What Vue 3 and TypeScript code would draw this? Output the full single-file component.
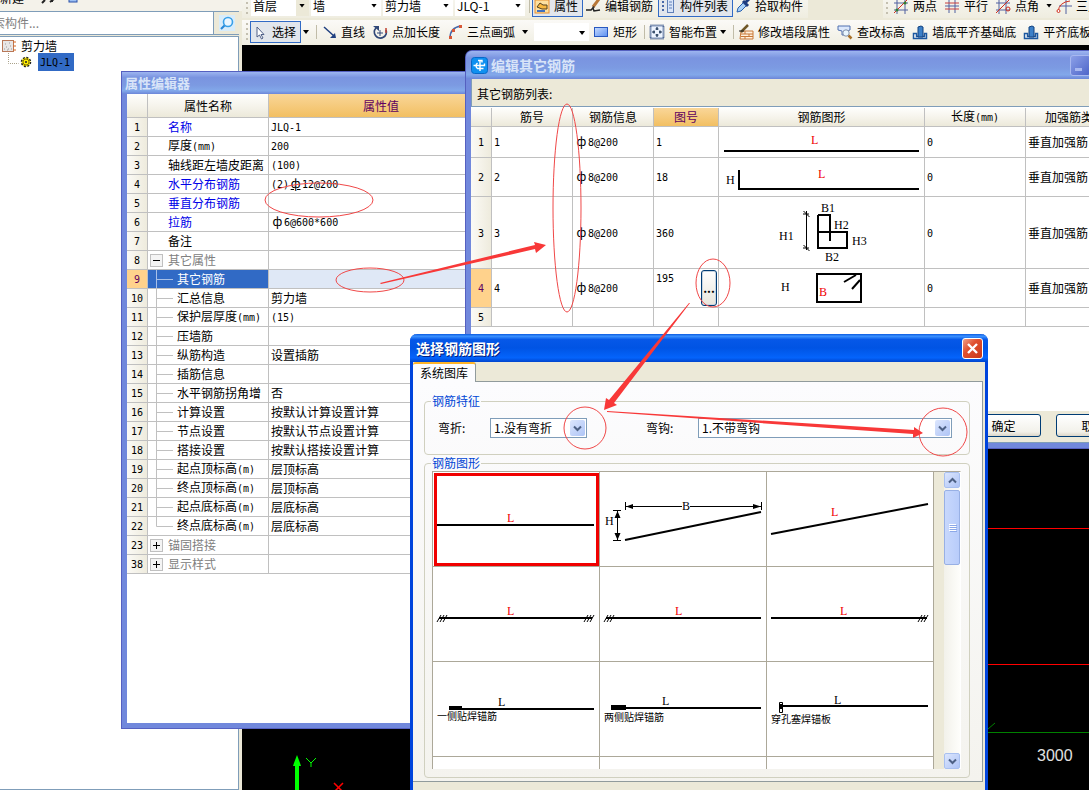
<script setup lang="ts">
import { h, ref } from 'vue'

interface PropRow {
  no: number
  name: string
  value?: string
  level?: number
  kind?: 'key' | 'group'
  open?: boolean
  last?: boolean
  selected?: boolean
  grade2?: boolean
}

/** Text with its half-width runs in the narrow fixed-pitch face and the bar symbol set full width. */
const Txt = (props: { t: string }) =>
  h(
    'span',
    { class: 'txt' },
    props.t
      .split(/([\x20-\x7e]+|ф)/)
      .filter(Boolean)
      .map((part) => {
        if (part === 'ф') return h('span', { class: 'phi' }, part)
        return /^[\x20-\x7e]/.test(part) ? h('span', { class: 'half' }, part) : part
      }),
  )
Txt.props = ['t']

const props: PropRow[] = [
  { no: 1, name: '名称', value: 'JLQ-1', kind: 'key' },
  { no: 2, name: '厚度(mm)', value: '200' },
  { no: 3, name: '轴线距左墙皮距离', value: '(100)' },
  { no: 4, name: '水平分布钢筋', value: '(2)ф12@200', kind: 'key', grade2: true },
  { no: 5, name: '垂直分布钢筋', kind: 'key' },
  { no: 6, name: '拉筋', value: 'ф6@600*600', kind: 'key' },
  { no: 7, name: '备注' },
  { no: 8, name: '其它属性', kind: 'group', open: true },
  { no: 9, name: '其它钢筋', level: 1, selected: true },
  { no: 10, name: '汇总信息', value: '剪力墙', level: 1 },
  { no: 11, name: '保护层厚度(mm)', value: '(15)', level: 1 },
  { no: 12, name: '压墙筋', level: 1 },
  { no: 13, name: '纵筋构造', value: '设置插筋', level: 1 },
  { no: 14, name: '插筋信息', level: 1 },
  { no: 15, name: '水平钢筋拐角增', value: '否', level: 1 },
  { no: 16, name: '计算设置', value: '按默认计算设置计算', level: 1 },
  { no: 17, name: '节点设置', value: '按默认节点设置计算', level: 1 },
  { no: 18, name: '搭接设置', value: '按默认搭接设置计算', level: 1 },
  { no: 19, name: '起点顶标高(m)', value: '层顶标高', level: 1 },
  { no: 20, name: '终点顶标高(m)', value: '层顶标高', level: 1 },
  { no: 21, name: '起点底标高(m)', value: '层底标高', level: 1 },
  { no: 22, name: '终点底标高(m)', value: '层底标高', level: 1, last: true },
  { no: 23, name: '锚固搭接', kind: 'group' },
  { no: 38, name: '显示样式', kind: 'group' },
]

const bars = [
  { no: 1, fig: '1' },
  { no: 2, fig: '18' },
  { no: 3, fig: '360' },
  { no: 4, fig: '195' },
]

const picked = ref(0)
const search = ref('')
</script>

<template>
  <div class="app">
    <aside class="side">
      <div class="side-top">
        <span>新建</span>
        <svg width="60" height="8" viewBox="0 0 60 8">
          <path d="M1 3l3-3M9 2l4-3M11 0v2" stroke="#222" stroke-width="2" fill="none" />
          <rect x="28" y="-6" width="8" height="8" fill="#9cc0f4" stroke="#2a50a8" />
        </svg>
      </div>
      <div class="search">
        <input v-model="search" type="text" placeholder="搜索构件..." aria-label="搜索构件" />
        <button type="button" aria-label="查找">
          <svg width="16" height="16" viewBox="0 0 16 16">
            <rect width="16" height="16" fill="#d8ecfa" />
            <circle cx="9" cy="7" r="4.5" fill="#eaf6ff" stroke="#38a0e8" stroke-width="1.6" />
            <path d="M5.500 10.500L2 14" stroke="#2888d8" stroke-width="2.200" />
          </svg>
        </button>
      </div>
      <div class="tree">
        <div class="node">
          <svg width="16" height="14" viewBox="0 0 16 14">
            <rect x="1.500" y="1.500" width="11" height="11" fill="#e8e6e6" stroke="#b87858" />
            <path d="M12 3h3M12 7h3M12 11h3" stroke="#d86820" />
            <path d="M3 10h1M5 8h1M7 10h1M9 7h1M4 5h1M8 4h1M10 10h1M6 11h1" stroke="#999" />
          </svg>
          <span>剪力墙</span>
        </div>
        <div class="node child">
          <svg width="27" height="18" viewBox="0 0 27 18">
            <path d="M1.500 0v10.500h10" stroke="#a8a088" fill="none" stroke-dasharray="1 1" />
            <circle cx="19" cy="9" r="4.500" fill="#ffee00" stroke="#222" stroke-width="1.500" stroke-dasharray="2 1.500" />
            <circle cx="19" cy="9" r="3" fill="#ffee00" stroke="#887700" />
            <circle cx="19" cy="9" r="1" fill="#222" />
          </svg>
          <span class="hot"><Txt t="JLQ-1" /></span>
        </div>
      </div>
    </aside>

    <main class="work">
      <div class="bars">
        <div class="bar-row first">
          <div class="bar">
            <i class="grip"></i>
            <span class="combo short shade"><select aria-label="楼层"><option>首层</option></select></span>
            <span class="combo"><select aria-label="类型"><option>墙</option></select></span>
            <span class="combo"><select aria-label="构件类型"><option>剪力墙</option></select></span>
            <span class="combo"><select aria-label="构件"><option>JLQ-1</option></select></span>
            <i class="sep"></i>
            <button type="button" class="tool on">
              <svg width="16" height="16" viewBox="0 0 16 16">
                <rect x="1" y="2" width="14" height="13" fill="#fde0a0" stroke="#e89030" />
                <path d="M3 9l3-4 3 2 4 0 0 4-5 0z" fill="#f8b840" stroke="#554020" />
                <path d="M3 13h8" stroke="#4070c0" stroke-width="2" />
              </svg>属性
            </button>
            <button type="button" class="tool">
              <svg width="16" height="16" viewBox="0 0 16 16">
                <path d="M1 12h5l2-2 1 3 6-1" stroke="#222" stroke-width="1.500" fill="none" />
                <path d="M8 9l6-8" stroke="#b87838" stroke-width="3" />
                <path d="M7 11l1-3 2 1z" fill="#333" />
              </svg>编辑钢筋
            </button>
            <button type="button" class="tool on">
              <svg width="16" height="16" viewBox="0 0 16 16">
                <path d="M2 4h3M2 8h3M2 12h3" stroke="#4868a8" stroke-width="2" stroke-dasharray="2 1" />
                <rect x="7.500" y="1.500" width="6" height="13" fill="#d8e4f8" stroke="#6080b8" />
                <path d="M9 4h3M9 7h3M9 10h3" stroke="#6080b8" />
              </svg>构件列表
            </button>
            <button type="button" class="tool">
              <svg width="16" height="16" viewBox="0 0 16 16">
                <path d="M2 14l1-4 6-6 3 3-6 6z" fill="#a8d0f8" stroke="#2860b0" />
                <path d="M8 3l5 5M10 5l4-4" stroke="#1c3c80" stroke-width="3" />
              </svg>拾取构件
            </button>
          </div>
          <div class="bar far">
            <i class="grip"></i>
            <button type="button" class="tool">
              <svg width="16" height="16" viewBox="0 0 16 16">
                <path d="M4 2v14M12 2v14M1 5h14M1 12h14" stroke="#5060a0" />
                <path d="M1 15L14 2" stroke="#d03020" /><circle cx="12" cy="5" r="1.500" fill="#308030" /><circle cx="4" cy="12" r="1.500" fill="#308030" />
              </svg>两点
            </button>
            <button type="button" class="tool">
              <svg width="16" height="16" viewBox="0 0 16 16">
                <path d="M5 1v14M11 1v14" stroke="#5060a0" /><path d="M1 5h14M1 11h14" stroke="#c84040" /><path d="M1 8h14" stroke="#5060a0" />
              </svg>平行
            </button>
            <button type="button" class="tool">
              <svg width="16" height="16" viewBox="0 0 16 16">
                <path d="M4 2v14M11 2v14M1 5h14M1 12h14" stroke="#5060a0" />
                <path d="M1 15L14 2" stroke="#d03020" /><circle cx="13" cy="11" r="2" fill="none" stroke="#d03020" />
              </svg>点角
            </button>
            <i class="caret"></i>
            <button type="button" class="tool">
              <svg width="16" height="16" viewBox="0 0 16 16">
                <path d="M10 2v14M3 8h13" stroke="#5060a0" />
                <path d="M2 14q1-10 12-11" stroke="#d03020" fill="none" /><circle cx="2.500" cy="13" r="1.500" fill="#fff" stroke="#d03020" />
              </svg>三点辅轴
            </button>
          </div>
        </div>
        <div class="bar-row second">
          <i class="grip"></i>
          <button type="button" class="tool on">
            <svg width="16" height="16" viewBox="0 0 16 16">
              <path d="M5 3v10l2.500-2 2 4 1.500-1-2-3.500h3z" fill="#fff" stroke="#506088" />
            </svg>选择
          </button>
          <i class="caret"></i><i class="sep wide"></i>
          <button type="button" class="tool">
            <svg width="16" height="16" viewBox="0 0 16 16">
              <path d="M3 3l10 9" stroke="#204080" stroke-width="1.500" /><path d="M15 14H9l5-5z" fill="#204080" />
            </svg>直线
          </button>
          <button type="button" class="tool">
            <svg width="16" height="16" viewBox="0 0 16 16">
              <path d="M4 4a6 6 0 1 0 10 2" stroke="#304878" stroke-width="1.800" fill="none" />
              <path d="M1 2h6v5z" fill="#304878" /><path d="M8 6v6M5 9h6" stroke="#304878" /><path d="M14 4v5" stroke="#c04030" stroke-width="1.500" />
            </svg>点加长度
          </button>
          <button type="button" class="tool split">
            <svg width="16" height="16" viewBox="0 0 16 16">
              <path d="M3 14C3 7 7 3 14 2" stroke="#4868a8" stroke-width="1.500" fill="none" />
              <path d="M2 12h3v3H2zM5 5h3v3H5zM12 1h3v3h-3z" fill="#d85838" />
            </svg>三点画弧
          </button>
          <i class="caret wide"></i>
          <span class="combo blank"><select aria-label="顺逆"><option></option></select></span>
          <button type="button" class="tool">
            <svg width="16" height="16" viewBox="0 0 16 16">
              <defs><linearGradient id="rg" x2="1" y2="1"><stop offset="0" stop-color="#c8dcff" /><stop offset="1" stop-color="#5c90f0" /></linearGradient></defs>
              <rect x="1.500" y="3.500" width="13" height="9" fill="url(#rg)" stroke="#2858c0" />
            </svg>矩形
          </button>
          <i class="sep"></i>
          <button type="button" class="tool split">
            <svg width="16" height="16" viewBox="0 0 16 16">
              <rect x="1.500" y="1.500" width="13" height="13" fill="#eef4ff" stroke="#1c3c78" stroke-width="2" stroke-dasharray="1 1" />
              <path d="M8 3v3M8 10v3M3 8h3M10 8h3M6.500 5h3M6.500 11h3M5 6.500v3M11 6.500v3" stroke="#10284c" stroke-width="1.200" />
            </svg>智能布置
          </button>
          <i class="caret"></i><i class="sep wide"></i>
          <button type="button" class="tool">
            <svg width="16" height="16" viewBox="0 0 16 16">
              <path d="M3 7h12v8H2z" fill="#fff0dc" stroke="#c87838" /><path d="M3 10h12M3 12.500h12M7 7v3M11 10v3M7 12v3" stroke="#c87838" />
              <path d="M3 8l7-7" stroke="#705828" stroke-width="2.500" /><path d="M1 7h5" stroke="#222" />
            </svg>修改墙段属性
          </button>
          <button type="button" class="tool">
            <svg width="16" height="16" viewBox="0 0 16 16">
              <path d="M1 2h12v4l-3 1v4H5V7L1 6z" fill="#dce8fc" stroke="#5070b0" />
              <circle cx="9" cy="9" r="3.200" fill="#e8f6ff" stroke="#8090a8" /><path d="M11.500 11.500l3 3" stroke="#a87028" stroke-width="2.500" />
            </svg>查改标高
          </button>
          <button v-for="name in ['墙底平齐基础底', '平齐底板']" :key="name" type="button" class="tool">
            <svg width="16" height="16" viewBox="0 0 16 16">
              <path d="M1.500 14.500V9.500h3v3h8v-3h2v5z" fill="#fff" stroke="#1c58a0" stroke-width="1.500" />
              <path d="M6 13V3l3-1 2 1v10z" fill="#3c80c8" stroke="#104080" />
            </svg>{{ name }}
          </button>
        </div>
      </div>

      <svg class="canvas" width="847" height="745" viewBox="0 0 847 745">
        <path d="M0 483.500H847M0 619.500H847" stroke="#ff0000" />
        <path d="M746 687.500H847M746 684l7-6" stroke="#008000" />
        <text x="795" y="716" class="dim">3000</text>
        <path d="M53 745v-24h-2l1-3 3-8 3 8 1 3h-2v24z" fill="#00ff00" />
        <path d="M64 713l5 5 5-5M69 718v4" stroke="#00ff00" fill="none" />
        <path d="M92 738l9 9M101 738l-9 9" stroke="#ff0000" stroke-width="1.500" />
      </svg>
    </main>

    <!-- 属性编辑器 -->
    <section class="win prop-win">
      <h2 class="cap small">属性编辑器</h2>
      <div class="sheet">
        <table class="grid prop">
          <colgroup><col class="c-no" /><col class="c-name" /><col /></colgroup>
          <thead><tr><th></th><th>属性名称</th><th class="hot-col value-col">属性值</th></tr></thead>
          <tbody>
            <tr v-for="r in props" :key="r.no" :class="{ sel: r.selected }">
              <th scope="row"><Txt :t="String(r.no)" /></th>
              <td>
                <div class="name" :class="[r.kind, { deep: r.level }]">
                  <svg v-if="r.level" class="twig" width="29" height="19" viewBox="0 0 29 19">
                    <path :d="r.last ? 'M8.500 0v9.500H25' : 'M8.500 0v19M8.500 9.500H25'" fill="none" :stroke="r.selected ? '#a8c0e8' : '#c0c0c0'" />
                  </svg>
                  <button v-else-if="r.kind === 'group'" type="button" class="fold" :aria-label="r.name">
                    <svg width="9" height="9" viewBox="0 0 9 9"><path :d="r.open ? 'M1 4.500h7' : 'M1 4.500h7M4.500 1v7'" stroke="#000" /></svg>
                  </button>
                  <Txt :t="r.name" />
                </div>
              </td>
              <td :class="{ grade: r.grade2 }"><Txt :t="r.value ?? ''" /></td>
            </tr>
          </tbody>
        </table>
      </div>
    </section>

    <!-- 编辑其它钢筋 -->
    <section class="win bar-win">
      <header class="cap">
        <svg width="17" height="17" viewBox="0 0 17 17">
          <rect x="0.500" y="0.500" width="16" height="16" rx="3" fill="#1090f0" stroke="#0868c8" />
          <path d="M9 14V3.500h-2M9 3.500h2v2M2.500 8.500h11v-2M6.500 6q-3 2.500 0 5.500h6" stroke="#fff" stroke-width="1.400" fill="none" />
        </svg>
        <h2>编辑其它钢筋</h2>
        <button type="button" class="sys" aria-label="最小化"><i></i></button>
        <button type="button" class="sys" aria-label="最大化"></button>
        <button type="button" class="sys" aria-label="关闭"></button>
      </header>
      <p class="lead">其它钢筋列表:</p>
      <div class="sheet">
        <table class="grid list">
          <colgroup>
            <col class="c-no" /><col class="c-a" /><col class="c-a" /><col class="c-fig" /><col class="c-pic" /><col class="c-len" /><col class="c-type" />
          </colgroup>
          <thead>
            <tr>
              <th></th><th>筋号</th><th>钢筋信息</th><th class="hot-col">图号</th><th>钢筋图形</th><th><Txt t="长度(mm)" /></th><th>加强筋类型</th>
            </tr>
          </thead>
          <tbody>
            <tr v-for="b in bars" :key="b.no" :class="['r' + b.no, { cur: b.no === 4 }]">
              <th scope="row"><Txt :t="String(b.no)" /></th>
              <td><Txt :t="String(b.no)" /></td>
              <td><Txt t="ф8@200" /></td>
              <td>
                <div v-if="b.no === 4" class="pick"><Txt :t="b.fig" /><button type="button" aria-label="选择图形">...</button></div>
                <Txt v-else :t="b.fig" />
              </td>
              <td class="pic">
                <svg v-if="b.no === 1" width="205" height="30" viewBox="0 0 205 30">
                  <path d="M5 24H200" class="ink" /><text x="92" y="17" class="red">L</text>
                </svg>
                <svg v-else-if="b.no === 2" width="205" height="38" viewBox="0 0 205 38">
                  <path d="M20 12V31H200" class="ink" /><text x="7" y="26">H</text><text x="99" y="20" class="red">L</text>
                </svg>
                <svg v-else-if="b.no === 3" width="205" height="71" viewBox="0 0 205 71">
                  <path d="M99 18H111V44M99 18V51H128V35H99" class="ink" />
                  <path d="M87.500 14V53M84 17h6M84.500 14l6 6M84 51h6M84.500 48l6 6" class="thin" />
                  <text x="60" y="43">H1</text><text x="102" y="15">B1</text><text x="115" y="32">H2</text><text x="133" y="48">H3</text><text x="106" y="64">B2</text>
                </svg>
                <svg v-else width="205" height="38" viewBox="0 0 205 38">
                  <path d="M98 5H142V33H98ZM125 13L137 6M133 20L141 11" class="ink" />
                  <text x="62" y="22">H</text><text x="100" y="27" class="red">B</text>
                </svg>
              </td>
              <td><Txt t="0" /></td>
              <td>垂直加强筋</td>
            </tr>
            <tr>
              <th scope="row"><Txt t="5" /></th><td></td><td></td><td></td><td></td><td></td><td></td>
            </tr>
          </tbody>
        </table>
      </div>
      <footer class="foot">
        <button type="button" class="push">确定</button>
        <button type="button" class="push">取消</button>
      </footer>
    </section>

    <!-- 选择钢筋图形 -->
    <section class="dialog" role="dialog" aria-labelledby="dlg">
      <header class="dcap">
        <h2 id="dlg">选择钢筋图形</h2>
        <button type="button" class="close" aria-label="关闭">
          <svg width="19" height="19" viewBox="0 0 19 19"><path d="M5 5l9 9M14 5l-9 9" stroke="#fff" stroke-width="2.400" /></svg>
        </button>
      </header>
      <div class="dbody">
        <div class="tabs"><button type="button" class="tab">系统图库</button></div>
        <div class="pane">
          <fieldset class="feat">
            <legend>钢筋特征</legend>
            <div class="fields">
              <label for="bend">弯折:</label>
              <span class="drop bend"><select id="bend"><option>1.没有弯折</option></select><i><svg width="9" height="7" viewBox="0 0 9 7"><path d="M1 1.500l3.500 3.500L8 1.500" /></svg></i></span>
              <label for="hook">弯钩:</label>
              <span class="drop hook"><select id="hook"><option>1.不带弯钩</option></select><i><svg width="9" height="7" viewBox="0 0 9 7"><path d="M1 1.500l3.500 3.500L8 1.500" /></svg></i></span>
            </div>
          </fieldset>
          <fieldset class="shapes">
            <legend>钢筋图形</legend>
            <div class="lib">
              <div class="cells">
                <button v-for="n in 12" :key="n" type="button" class="cell" :class="{ chosen: picked === n - 1 }" :aria-label="'图形 ' + n" @click="picked = n - 1">
                  <svg width="166" height="94" viewBox="0 0 166 94">
                    <g v-if="n === 1"><path d="M4 53H161" class="ink" /><text x="74" y="50" class="red">L</text></g>
                    <g v-else-if="n === 2">
                      <path d="M25 68L161 40" class="ink" />
                      <path d="M25.500 30v8M161.500 30v8M26 34.500H82M90 34.500H161M17.500 39V69M13 38.500h8M13 68.500h8" class="thin" />
                      <path d="M26 34.500l7-2.500v5zM161 34.500l-8-2.500v5zM17.500 39l3 7h-6zM17.500 68l3-7h-6z" />
                      <text x="5" y="53">H</text><text x="82" y="38">B</text>
                    </g>
                    <g v-else-if="n === 3"><path d="M4 62L161 32" class="ink" /><text x="64" y="44" class="red">L</text></g>
                    <g v-else-if="n === 4">
                      <path d="M6 51H159" class="ink" /><path d="M4 55l4-7M7 55l4-7M10 55l4-7M151 55l4-7M154 55l4-7M157 55l4-7" class="thin" />
                      <text x="74" y="48" class="red">L</text>
                    </g>
                    <g v-else-if="n === 5">
                      <path d="M6 51H161" class="ink" /><path d="M4 55l4-7M7 55l4-7M10 55l4-7" class="thin" /><text x="75" y="48" class="red">L</text>
                    </g>
                    <g v-else-if="n === 6">
                      <path d="M4 51H160" class="ink" /><path d="M151 55l4-7M154 55l4-7M157 55l4-7" class="thin" /><text x="73" y="48" class="red">L</text>
                    </g>
                    <g v-else-if="n === 7">
                      <path d="M16 47H161" class="ink" /><path d="M16 44h13v4H16z" /><text x="65" y="44">L</text><text x="4" y="58" class="note">一侧贴焊锚筋</text>
                    </g>
                    <g v-else-if="n === 8">
                      <path d="M11 46H161" class="ink" /><path d="M11 43h15v5H11z" /><text x="62" y="43">L</text><text x="4" y="59" class="note">两侧贴焊锚筋</text>
                    </g>
                    <g v-else-if="n === 9">
                      <path d="M14 44H161" class="ink" /><path d="M12.500 40.500h3v10h-3z" class="thin" /><path d="M12 42h3v5h-3z" /><text x="67" y="42">L</text><text x="4" y="61" class="note">穿孔塞焊锚板</text>
                    </g>
                  </svg>
                </button>
              </div>
              <div class="scroll">
                <i class="sb"><svg width="9" height="7" viewBox="0 0 9 7"><path d="M1 5.500L4.500 2 8 5.500" /></svg></i>
                <i class="thumb"><b></b><b></b><b></b><b></b></i>
                <i class="sb end"><svg width="9" height="7" viewBox="0 0 9 7"><path d="M1 1.500l3.500 3.500L8 1.500" /></svg></i>
              </div>
            </div>
          </fieldset>
        </div>
      </div>
    </section>

    <svg class="marks" width="1089" height="790" viewBox="0 0 1089 790">
      <g fill="none" stroke="#f04848">
        <ellipse cx="319" cy="200" rx="54" ry="17" />
        <ellipse cx="370" cy="280" rx="34" ry="12" />
        <ellipse cx="567" cy="208" rx="14" ry="104" />
        <ellipse cx="713" cy="283" rx="17" ry="24" />
        <circle cx="585" cy="428" r="21" />
        <circle cx="943" cy="432" r="24" />
      </g>
      <g fill="#f83838">
        <path d="M380 283L535 245l-1-3 12 3-10 8-1-4-154 35z" />
        <path d="M690 303L614 403l3 2-13 5 2-12 3 2 80-97z" />
        <path d="M607 411L914 430v-3l9 6-10 5v-4L607 412z" />
      </g>
    </svg>
  </div>
</template>

<style>
html,
body {
  background: #fff;
}
.half {
  font-family: "DejaVu Sans Mono", monospace;
  font-size: 10px;
}
.txt {
  white-space: pre;
}
.phi {
  display: inline-block;
  width: 13px;
  text-align: center;
}
.grade .phi {
  text-decoration: underline;
}
</style>

<style scoped>
.app {
  position: relative;
  display: flex;
  height: 100vh;
  overflow: hidden;
  font: 12px/16px "Noto Sans CJK SC", sans-serif;
  color: #000;
}
.app * {
  box-sizing: border-box;
}
button,
input,
select {
  font: inherit;
  color: inherit;
  margin: 0;
  padding: 0;
  border: 0;
  border-radius: 0;
  background: none;
}
select {
  appearance: none;
  width: 100%;
  height: 100%;
}
h2,
p,
fieldset {
  margin: 0;
  padding: 0;
  font-size: inherit;
}
svg {
  display: block;
  flex: none;
}
table {
  border-collapse: separate;
  border-spacing: 0;
  table-layout: fixed;
}

/* left panel */
.side {
  display: flex;
  flex-direction: column;
  flex: none;
  width: 242px;
  background: #ece9d8;
}
.side-top {
  display: flex;
  align-items: flex-end;
  gap: 17px;
  height: 11px;
  overflow: hidden;
  padding-bottom: 8px;
  background: #f4f2ea;
}
.side-top span {
  height: 16px;
  margin-bottom: -3px;
}
.side-top svg {
  align-self: flex-start;
}
.search {
  display: flex;
  height: 24px;
  width: 239px;
  border: 1px solid #7f9db9;
  border-left: 0;
  border-right: 0;
}
.search input {
  flex: 1;
  min-width: 0;
  background: #fff;
  border-right: 1px solid #7f9db9;
  text-indent: -19px;
}
.search input::placeholder {
  color: #808080;
}
.search button {
  display: grid;
  place-items: center;
  width: 25px;
}
.tree {
  flex: 1;
  width: 239px;
  margin-top: 1px;
  padding: 1px 0 0 1px;
  background: #fff;
  border: 1px solid #7f9db9;
  border-left: 0;
}
.node {
  display: flex;
  align-items: center;
  gap: 4px;
  height: 16px;
}
.child {
  padding-left: 6px;
}
.hot {
  padding: 0 4px 0 2px;
  background: #316ac5;
}

/* toolbars */
.work {
  display: flex;
  flex-direction: column;
  flex: 1;
  min-width: 0;
  background: #000;
}
.bars {
  background: #ece9d8;
}
.bar-row {
  display: flex;
  overflow: hidden;
  white-space: nowrap;
}
.first {
  justify-content: space-between;
  align-items: flex-end;
  height: 18px;
}
.bar {
  display: flex;
  align-items: center;
  height: 24px;
  padding: 0 0 1px 4px;
  background: linear-gradient(#f8f7f2, #efede0);
}
.far {
  flex: none;
  width: 206px;
  padding-left: 0;
}
.second {
  align-items: center;
  height: 25px;
  margin-top: 2px;
  padding: 0 0 1px 4px;
  background: linear-gradient(#fbfaf7, #f0eee2);
}
.grip {
  flex: none;
  width: 2px;
  height: 18px;
  margin-right: 2px;
  background: repeating-linear-gradient(#c4c0b0 0 2px, transparent 2px 5px);
}
.bar .grip {
  margin-right: 3px;
}
.far .grip {
  margin: 0 3px;
}
.sep {
  flex: none;
  width: 1px;
  height: 14px;
  margin: 0 2px;
  background: #c0bca8;
}
.sep.wide {
  margin-left: 5px;
}
.tool {
  display: flex;
  flex: none;
  align-items: center;
  gap: 4px;
  height: 22px;
  padding: 0 4px 0 1px;
  border: 1px solid transparent;
}
.tool.on {
  border-color: #316ac5;
  background: #e2e6ec;
}
.tool.split {
  padding-right: 0;
}
.caret,
.combo::after {
  flex: none;
  width: 10px;
  height: 4px;
  clip-path: polygon(20% 0, 80% 0, 50% 100%);
  background: #000;
}
.caret.wide {
  margin: 0 4px;
}
.combo {
  position: relative;
  flex: none;
  width: 70px;
  height: 18px;
  margin-right: 2px;
  background: #fff;
}
.first .combo {
  height: 20px;
}
.combo.short {
  width: 58px;
}
.combo.blank {
  width: 55px;
}
.combo.shade {
  background: linear-gradient(90deg, #fff 45px, #ece9d8 45px);
}
.combo::after {
  content: "";
  position: absolute;
  right: 2px;
  top: 8px;
  pointer-events: none;
}
.combo select {
  padding-left: 2px;
}
.canvas text.dim {
  font: 16px "Liberation Sans", sans-serif;
  fill: #e0e0e0;
}

/* inactive windows */
.win {
  position: absolute;
  display: flex;
  flex-direction: column;
  border: 5px solid #7188dc;
  border-top: 0;
  box-shadow: inset 0 0 0 1px #7f9db9, 0 0 0 1px #5560c0;
  background: #ece9d8;
}
.prop-win {
  left: 122px;
  top: 72px;
  width: 349px;
  height: 656px;
}
.bar-win {
  left: 466px;
  right: -56px;
  top: 51px;
  height: 397px;
  border-radius: 6px 6px 0 0;
}
.cap {
  display: flex;
  align-items: center;
  gap: 3px;
  height: 28px;
  margin: 0 -5px;
  padding: 0 6px 0 5px;
  border-radius: 6px 6px 0 0;
  background: linear-gradient(#9db5f0, #7a94e0 25%, #7c9ae2 60%, #82a8ea 85%, #6c86d8);
  color: #d8e4f8;
  font-weight: 700;
  font-size: 14px;
}
.cap.small {
  height: 22px;
  padding: 0 0 0 3px;
  border-radius: 0;
  font-size: 13px;
}
.cap h2 {
  flex: 1;
}
.sys {
  display: flex;
  align-items: flex-end;
  width: 21px;
  height: 21px;
  padding: 4px;
  border: 1px solid #a8b8f0;
  border-radius: 3px;
  background: linear-gradient(135deg, #8ca0e8, #4c64c8);
}
.sys i {
  width: 7px;
  height: 3px;
  background: #a8b8f0;
}
.sheet {
  flex: 1;
  background: #fff;
  overflow: hidden;
}
.bar-win .sheet {
  flex: none;
  height: 305px;
  border-top: 1px solid #7f9db9;
  padding-top: 1px;
}
.lead {
  height: 27px;
  padding: 7px 0 0 6px;
}
.grid th,
.grid td {
  height: 19px;
  padding: 0 0 0 2px;
  border-right: 1px solid #c0c0c0;
  border-bottom: 1px solid #c0c0c0;
  text-align: left;
  font-weight: 400;
  line-height: 16px;
  white-space: nowrap;
}
.grid th {
  padding: 0;
  text-align: center;
  background: linear-gradient(#fefefc, #f6f4ec 50%, #ece9da);
}
.grid tbody th {
  background: linear-gradient(90deg, #fbfaf6, #eeebdd);
}
.grid .hot-col {
  background: linear-gradient(#f9d698, #f2bf62);
  color: #600060;
}
.grid .value-col {
  padding-left: 28px;
}
.grid tbody .cur th,
.grid tbody .sel th {
  background: #ffd28c;
  color: #600060;
}
.prop {
  width: 100%;
}
.prop thead th {
  height: 24px;
}
.c-no {
  width: 21px;
}
.c-name {
  width: 121px;
}
.c-a {
  width: 81px;
}
.c-fig {
  width: 65px;
}
.c-pic {
  width: 206px;
}
.c-len {
  width: 101px;
}
.c-type {
  width: 99px;
}
.list {
  width: 654px;
}
.grid .pic {
  padding: 0;
}
.r1 td {
  height: 31px;
}
.r2 td,
.r4 td {
  height: 39px;
}
.r3 td {
  height: 72px;
}
.name {
  display: flex;
  align-items: center;
  height: 18px;
  margin-left: -2px;
  padding-left: 20px;
  overflow: hidden;
}
.name.key {
  color: #0000e8;
}
.name.group {
  gap: 5px;
  padding-left: 2px;
  color: #808080;
}
.name.deep {
  padding-left: 0;
}
.sel .name {
  background: #316ac5;
  color: #fff;
}
.sel td:last-child {
  background: #dfe8f6;
}
.fold {
  display: grid;
  place-items: center;
  width: 13px;
  height: 13px;
  border: 1px solid #c0c0c0;
  background: #f4f4f4;
}
.pick {
  display: flex;
  justify-content: space-between;
  height: 38px;
}
.pick button {
  width: 16px;
  height: 36px;
  margin: 1px 1px 0 0;
  border: 1px solid #003c74;
  border-radius: 3px;
  box-shadow: inset 0 0 0 1px #c8d4e0;
  background: linear-gradient(#fff, #e8e6dc);
  font-weight: 700;
}
.foot {
  display: flex;
  justify-content: flex-end;
  gap: 15px;
  padding: 3px 9px 0 0;
}
.push {
  width: 75px;
  height: 23px;
  border: 1px solid #003c74;
  border-radius: 3px;
  background: linear-gradient(#fff, #f2f1ea 80%, #dcd6c8);
}

/* drawings */
.ink {
  fill: none;
  stroke: #000;
  stroke-width: 2;
}
.thin {
  fill: none;
  stroke: #000;
}
.pic text,
.cell text {
  font: 12px "Liberation Serif", serif;
}
text.red {
  fill: #f00000;
}
.cell text.note {
  font: 10px "Noto Sans CJK SC", sans-serif;
}

/* active dialog */
.dialog {
  position: absolute;
  left: 410px;
  top: 334px;
  width: 578px;
  height: 480px;
  display: flex;
  flex-direction: column;
  border: solid #0044dc;
  border-width: 0 3px;
  border-radius: 7px 7px 0 0;
  background: #ece9d8;
}
.dcap {
  display: flex;
  align-items: center;
  justify-content: space-between;
  height: 28px;
  margin: 0 -3px;
  padding: 0 5px 0 6px;
  border-radius: 7px 7px 0 0;
  background: linear-gradient(#0a5ae0, #3c92ff 8%, #0658e8 20%, #0054e4 50%, #0464fc 85%, #0044cc);
  color: #fff;
  font-weight: 700;
  font-size: 14px;
  text-shadow: 1px 1px #002080;
}
.close {
  width: 21px;
  height: 21px;
  border: 1px solid #fff;
  border-radius: 3px;
  background: linear-gradient(135deg, #f0a088, #e05030 40%, #c83818);
}
.dbody {
  padding-right: 2px;
}
.tabs {
  display: flex;
  height: 19px;
}
.tab {
  width: 63px;
  height: 20px;
  border: solid #919b9c;
  border-width: 0 1px 0 0;
  border-top: 2px solid #ffb428;
  border-radius: 3px 3px 0 0;
  background: #fcfcfe;
  line-height: 16px;
  z-index: 1;
}
.pane {
  height: 401px;
  padding: 10px 12px 0 11px;
  border: 1px solid #919b9c;
  border-left: 0;
  background: linear-gradient(#fcfcfe, #f4f3ee);
}
fieldset {
  border: 1px solid #d0d0bf;
  border-radius: 4px;
  min-width: 0;
}
legend {
  margin-left: 6px;
  padding: 0 1px;
  line-height: 18px;
  color: #0046d5;
}
.feat {
  height: 63px;
}
.fields {
  display: flex;
  align-items: flex-start;
  padding: 8px 17px 0 13px;
}
.fields label {
  flex: none;
  line-height: 20px;
  width: 52px;
}
.drop {
  display: flex;
  align-items: center;
  height: 20px;
  padding: 0 1px 0 3px;
  border: 1px solid #7f9db9;
  background: #fff;
}
.drop i,
.sb {
  display: grid;
  place-items: center;
  flex: none;
  width: 15px;
  height: 16px;
  border-radius: 2px;
  background: linear-gradient(135deg, #dce6fd, #aec4f6);
}
.drop path,
.sb path {
  fill: none;
  stroke: #4d6185;
  stroke-width: 2;
}
.bend {
  width: 97px;
  margin-right: 59px;
}
.hook {
  flex: 1;
}
.shapes {
  height: 324px;
  margin-top: -1px;
}
.lib {
  display: flex;
  height: 298px;
  margin: -1px 8px 0 7px;
  overflow: hidden;
  background: #ece9d8;
  border-top: 1px solid #aca899;
  border-right: 1px solid #fff;
}
.cells {
  display: grid;
  grid-template-columns: repeat(3, 167px);
  grid-auto-rows: 95px;
  border-left: 1px solid #aca899;
  background: #fff;
}
.cell {
  overflow: hidden;
  border: solid #aca899;
  border-width: 0 1px 1px 0;
}
.cell.chosen {
  outline: 3px solid #f00000;
  outline-offset: -4px;
}
.scroll {
  display: flex;
  flex-direction: column;
  width: 16px;
  margin-left: auto;
  gap: 2px;
  background: linear-gradient(90deg, #f2f1ea, #fefefb);
}
.sb {
  width: 16px;
  border: 1px solid #a8c0f0;
}
.sb.end {
  margin-top: auto;
}
.thumb {
  display: flex;
  flex-direction: column;
  align-items: center;
  justify-content: center;
  gap: 1px;
  height: 75px;
  border: 1px solid #98b0e4;
  border-radius: 2px;
  background: linear-gradient(90deg, #c8d8fc, #b8ccfa);
}
.thumb b {
  width: 7px;
  height: 1px;
  background: #fff;
  box-shadow: 1px 1px #8ca8e8;
}

.marks {
  position: absolute;
  left: 0;
  top: 0;
  pointer-events: none;
}
</style>
